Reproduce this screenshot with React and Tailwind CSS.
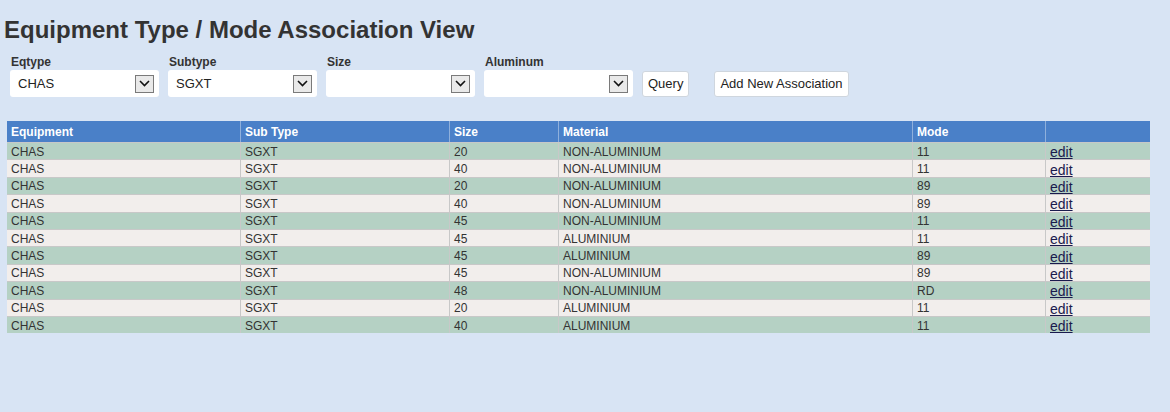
import React from "react";

const rows = [
  ["CHAS", "SGXT", "20", "NON-ALUMINIUM", "11"],
  ["CHAS", "SGXT", "40", "NON-ALUMINIUM", "11"],
  ["CHAS", "SGXT", "20", "NON-ALUMINIUM", "89"],
  ["CHAS", "SGXT", "40", "NON-ALUMINIUM", "89"],
  ["CHAS", "SGXT", "45", "NON-ALUMINIUM", "11"],
  ["CHAS", "SGXT", "45", "ALUMINIUM", "11"],
  ["CHAS", "SGXT", "45", "ALUMINIUM", "89"],
  ["CHAS", "SGXT", "45", "NON-ALUMINIUM", "89"],
  ["CHAS", "SGXT", "48", "NON-ALUMINIUM", "RD"],
  ["CHAS", "SGXT", "20", "ALUMINIUM", "11"],
  ["CHAS", "SGXT", "40", "ALUMINIUM", "11"],
];

function Select({ label, value }) {
  return (
    <div className="flex flex-col w-[149px]">
      <div className="text-[12px] font-bold text-[#333] leading-[14px] h-[14px] pl-[1px]">{label}</div>
      <div className="mt-[1px] h-[27px] bg-white rounded-[3px] flex items-center justify-between pl-[8px] pr-[5px]">
        <span className="text-[13px] text-[#222] pt-[1px]">{value}</span>
        <div className="w-[19px] h-[18px] border border-[#7a7a7a] bg-[#e9e9e9] flex items-center justify-center">
          <svg width="11" height="7" viewBox="0 0 11 7">
            <path d="M1 1 L5.5 5.5 L10 1" stroke="#111" strokeWidth="1.6" fill="none" />
          </svg>
        </div>
      </div>
    </div>
  );
}

const cols = ["w-[233px]", "w-[209px]", "w-[109px]", "w-[354px]", "w-[133px]", "w-[105px]"];

export default function App() {
  return (
    <div className="w-[1170px] h-[412px] bg-[#d8e4f4] font-['Liberation_Sans',Arial,sans-serif] text-[#333] overflow-hidden">
      <div className="pt-[16px] pl-[4px] text-[24px] font-bold leading-[28px] text-[#333]">
        Equipment Type / Mode Association View
      </div>
      <div className="flex items-end mt-[11px] pl-[10px]">
        <div className="flex gap-[9px] items-end">
          <Select label="Eqtype" value="CHAS" />
          <Select label="Subtype" value="SGXT" />
          <Select label="Size" value="" />
          <Select label="Aluminum" value="" />
        </div>
        <button className="ml-[9px] h-[26px] px-[5px] bg-white border border-[#cfd6de] rounded-[3px] text-[13px] text-[#222]">
          Query
        </button>
        <button className="ml-[25px] h-[26px] px-[5px] bg-white border border-[#cfd6de] rounded-[3px] text-[13px] text-[#222]">
          Add New Association
        </button>
      </div>
      <div className="mt-[24px] ml-[7px] w-[1143px]">
        <div className="flex h-[21px] bg-[#4a80c8] text-white text-[12px] font-bold">
          {["Equipment", "Sub Type", "Size", "Material", "Mode", ""].map((h, i) => (
            <div key={i} className={`${cols[i]} ${i > 0 ? "border-l border-[#8fb0dc]" : ""} pl-[4px] pt-[1px] flex items-center`}>
              {h}
            </div>
          ))}
        </div>
        {rows.map((r, ri) => (
          <div
            key={ri}
            className={`flex h-[17.4px] text-[12px] text-[#333] border-t border-[#c8c8c8] ${ri % 2 === 0 ? "bg-[#b5d1c4]" : "bg-[#f2eeec]"}`}
          >
            {r.map((c, i) => (
              <div key={i} className={`${cols[i]} ${i > 0 ? "border-l border-[#c8c8c8]" : ""} pl-[4px] pt-[1px] flex items-center leading-none`}>
                {c}
              </div>
            ))}
            <div className={`${cols[5]} border-l border-[#c8c8c8] pl-[4px] flex items-center leading-none`}>
              <a href="#" className="text-[14px] text-[#1a1a4e] underline pt-[2px]">edit</a>
            </div>
          </div>
        ))}
      </div>
    </div>
  );
}
